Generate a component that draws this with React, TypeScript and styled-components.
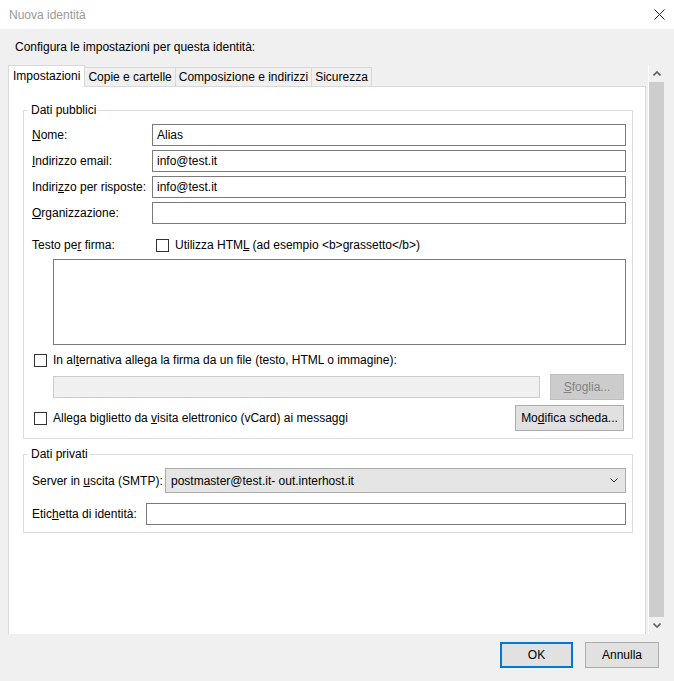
import React from "react";
import styled, { createGlobalStyle } from "styled-components";

const GlobalStyle = createGlobalStyle`
  html, body {
    margin: 0;
    padding: 0;
    background: #f0f0f0;
  }
  body {
    font-family: "Segoe UI", "Liberation Sans", Arial, sans-serif;
    font-size: 12px;
    line-height: 16px;
    color: #000;
  }
  * {
    box-sizing: border-box;
  }
`;

const Window = styled.div`
  width: 674px;
  height: 681px;
  display: flex;
  flex-direction: column;
  background: #f0f0f0;
  overflow: hidden;
`;

const TitleBar = styled.div`
  height: 29px;
  flex: none;
  background: #fff;
  display: flex;
  align-items: center;
  justify-content: space-between;
  padding: 0 9px;
  color: #999;
`;

const Intro = styled.div`
  height: 36px;
  flex: none;
  padding: 10px 0 0 15px;
`;

const Main = styled.div`
  height: 569px;
  flex: none;
  display: flex;
  padding-left: 8px;
`;

const TabBox = styled.div`
  width: 638px;
  display: flex;
  flex-direction: column;
`;

const TabStrip = styled.div`
  height: 21px;
  display: flex;
  align-items: flex-end;
`;

const Tab = styled.div<{ $active?: boolean }>`
  position: relative;
  z-index: ${(p) => (p.$active ? 1 : 0)};
  height: ${(p) => (p.$active ? "22px" : "19px")};
  margin-bottom: ${(p) => (p.$active ? "-1px" : "0")};
  margin-right: -1px;
  padding: ${(p) => (p.$active ? "2px 4px 0" : "1px 3px 0")};
  background: ${(p) => (p.$active ? "#fff" : "#f0f0f0")};
  border: 1px solid #d9d9d9;
  border-bottom: none;
  white-space: nowrap;
`;

const Panel = styled.div`
  flex: 1;
  background: #fff;
  border: 1px solid #d9d9d9;
  border-bottom: none;
  padding: 15px 12px 0 14px;
  display: flex;
  flex-direction: column;
`;

const Group = styled.fieldset<{ $top?: number }>`
  margin: ${(p) => p.$top ?? 0}px 0 0;
  min-width: 0;
  border: 1px solid #dcdcdc;
  padding: 6px 6px 7px 8px;
  display: flex;
  flex-direction: column;
`;

const Legend = styled.legend`
  padding: 0 2px 0 4px;
  margin-left: -5px;
  line-height: 16px;
`;

const FieldGrid = styled.div`
  display: grid;
  grid-template-columns: 111px 1fr;
  column-gap: 9px;
  row-gap: 4px;
  align-items: center;
`;

const Label = styled.label`
  white-space: nowrap;
`;

const Key = styled.span`
  text-decoration: underline;
`;

const TextInput = styled.div<{ $disabled?: boolean }>`
  height: 22px;
  border: 1px solid ${(p) => (p.$disabled ? "#cccccc" : "#7a7a7a")};
  background: ${(p) => (p.$disabled ? "#f0f0f0" : "#fff")};
  padding: 2px 4px;
  white-space: nowrap;
  overflow: hidden;
`;

const SignatureHead = styled.div`
  margin-top: 10px;
  height: 22px;
  display: grid;
  grid-template-columns: 111px 1fr;
  column-gap: 9px;
  align-items: center;
`;

const CheckLine = styled.div<{ $indent?: number }>`
  display: flex;
  align-items: center;
  gap: 6px;
  margin-left: ${(p) => p.$indent ?? 0}px;
  white-space: nowrap;
`;

const Box = styled.span`
  width: 13px;
  height: 13px;
  flex: none;
  border: 1px solid #333;
  background: #fff;
`;

const TextArea = styled.div`
  margin: 3px 0 0 21px;
  height: 86px;
  border: 1px solid #7a7a7a;
  background: #fff;
`;

const CheckRow = styled.div<{ $top: number; $height: number }>`
  margin-top: ${(p) => p.$top}px;
  height: ${(p) => p.$height}px;
  display: flex;
  align-items: center;
  justify-content: space-between;
`;

const FileRow = styled.div`
  margin-top: 3px;
  height: 26px;
  padding-left: 21px;
  display: flex;
  align-items: center;
  gap: 10px;
`;

const Button = styled.div<{ $width: number; $disabled?: boolean; $default?: boolean }>`
  width: ${(p) => p.$width}px;
  height: 26px;
  flex: none;
  display: flex;
  align-items: center;
  justify-content: center;
  background: ${(p) => (p.$disabled ? "#cccccc" : "#e1e1e1")};
  border: ${(p) =>
    p.$default ? "2px solid #0078d7" : p.$disabled ? "1px solid #bfbfbf" : "1px solid #adadad"};
  color: ${(p) => (p.$disabled ? "#838383" : "#000")};
  white-space: nowrap;
`;

const EndButtonWrap = styled.div`
  margin-right: 2px;
`;

const InlineRow = styled.div<{ $top: number; $labelWidth: number; $height: number }>`
  margin-top: ${(p) => p.$top}px;
  display: grid;
  grid-template-columns: ${(p) => p.$labelWidth}px 1fr;
  column-gap: 9px;
  align-items: center;
  height: ${(p) => p.$height}px;
`;

const Select = styled.div`
  height: 25px;
  border: 1px solid #acacac;
  background: #e5e5e5;
  display: flex;
  align-items: center;
  justify-content: space-between;
  padding: 0 7px 0 5px;
  white-space: nowrap;
`;

const Scrollbar = styled.div`
  width: 16px;
  margin-left: 2px;
  border-left: 1px solid #fff;
  display: flex;
  flex-direction: column;
  background: #f0f0f0;
`;

const Arrow = styled.div`
  height: 17px;
  flex: none;
  display: flex;
  align-items: center;
  justify-content: center;
`;

const Thumb = styled.div`
  flex: 1;
  background: #cdcdcd;
`;

const Footer = styled.div`
  flex: 1;
  display: flex;
  justify-content: flex-end;
  align-items: flex-start;
  gap: 12px;
  padding: 8px 15px 0 0;
`;

const CloseIcon = () => (
  <svg width="11" height="11" viewBox="0 0 11 11">
    <path d="M0.5 0.5 L10.5 10.5 M10.5 0.5 L0.5 10.5" stroke="#222" strokeWidth="1" fill="none" />
  </svg>
);

const Chevron = ({ up, color }: { up?: boolean; color: string }) => (
  <svg width="8" height="5" viewBox="0 0 8 5">
    <path
      d={up ? "M0.5 4.5 L4 1 L7.5 4.5" : "M0.5 0.5 L4 4 L7.5 0.5"}
      stroke={color}
      strokeWidth="1.6"
      fill="none"
    />
  </svg>
);

const SmallChevron = () => (
  <svg width="8" height="5" viewBox="0 0 8 5">
    <path d="M0.5 0.5 L4 4 L7.5 0.5" stroke="#333" strokeWidth="1" fill="none" />
  </svg>
);

export default function App() {
  return (
    <>
      <GlobalStyle />
      <Window>
        <TitleBar>
          <span>Nuova identità</span>
          <CloseIcon />
        </TitleBar>

        <Intro>Configura le impostazioni per questa identità:</Intro>

        <Main>
          <TabBox>
            <TabStrip>
              <Tab $active>Impostazioni</Tab>
              <Tab>Copie e cartelle</Tab>
              <Tab>Composizione e indirizzi</Tab>
              <Tab>Sicurezza</Tab>
            </TabStrip>

            <Panel>
              <Group>
                <Legend>Dati pubblici</Legend>
                <FieldGrid>
                  <Label>
                    <Key>N</Key>ome:
                  </Label>
                  <TextInput>Alias</TextInput>
                  <Label>
                    <Key>I</Key>ndirizzo email:
                  </Label>
                  <TextInput>info@test.it</TextInput>
                  <Label>
                    Indiri<Key>z</Key>zo per risposte:
                  </Label>
                  <TextInput>info@test.it</TextInput>
                  <Label>
                    <Key>O</Key>rganizzazione:
                  </Label>
                  <TextInput />
                </FieldGrid>

                <SignatureHead>
                  <Label>
                    Testo pe<Key>r</Key> firma:
                  </Label>
                  <CheckLine $indent={4}>
                    <Box />
                    <span>
                      Utilizza HTM<Key>L</Key> (ad esempio &lt;b&gt;grassetto&lt;/b&gt;)
                    </span>
                  </CheckLine>
                </SignatureHead>

                <TextArea />

                <CheckRow $top={4} $height={22}>
                  <CheckLine $indent={2}>
                    <Box />
                    <span>
                      In al<Key>t</Key>ernativa allega la firma da un file (testo, HTML o immagine):
                    </span>
                  </CheckLine>
                </CheckRow>

                <FileRow>
                  <TextInput $disabled style={{ flex: 1 }} />
                  <EndButtonWrap>
                    <Button $width={74} $disabled>
                      <span>
                        <Key>S</Key>foglia...
                      </span>
                    </Button>
                  </EndButtonWrap>
                </FileRow>

                <CheckRow $top={5} $height={26}>
                  <CheckLine $indent={2}>
                    <Box />
                    <span>
                      Allega biglietto da <Key>v</Key>isita elettronico (vCard) ai messaggi
                    </span>
                  </CheckLine>
                  <EndButtonWrap>
                    <Button $width={109}>
                      <span>
                        Mo<Key>d</Key>ifica scheda...
                      </span>
                    </Button>
                  </EndButtonWrap>
                </CheckRow>
              </Group>

              <Group $top={7}>
                <Legend>Dati privati</Legend>
                <InlineRow $top={0} $labelWidth={124} $height={25}>
                  <Label>
                    Server in <Key>u</Key>scita (SMTP):
                  </Label>
                  <Select>
                    <span>postmaster@test.it- out.interhost.it</span>
                    <SmallChevron />
                  </Select>
                </InlineRow>
                <InlineRow $top={10} $labelWidth={105} $height={22}>
                  <Label>
                    Etic<Key>h</Key>etta di identità:
                  </Label>
                  <TextInput />
                </InlineRow>
              </Group>
            </Panel>
          </TabBox>

          <Scrollbar>
            <Arrow>
              <Chevron up color="#606060" />
            </Arrow>
            <Thumb />
            <Arrow>
              <Chevron color="#606060" />
            </Arrow>
          </Scrollbar>
        </Main>

        <Footer>
          <Button $width={73} $default>
            OK
          </Button>
          <Button $width={74}>Annulla</Button>
        </Footer>
      </Window>
    </>
  );
}
